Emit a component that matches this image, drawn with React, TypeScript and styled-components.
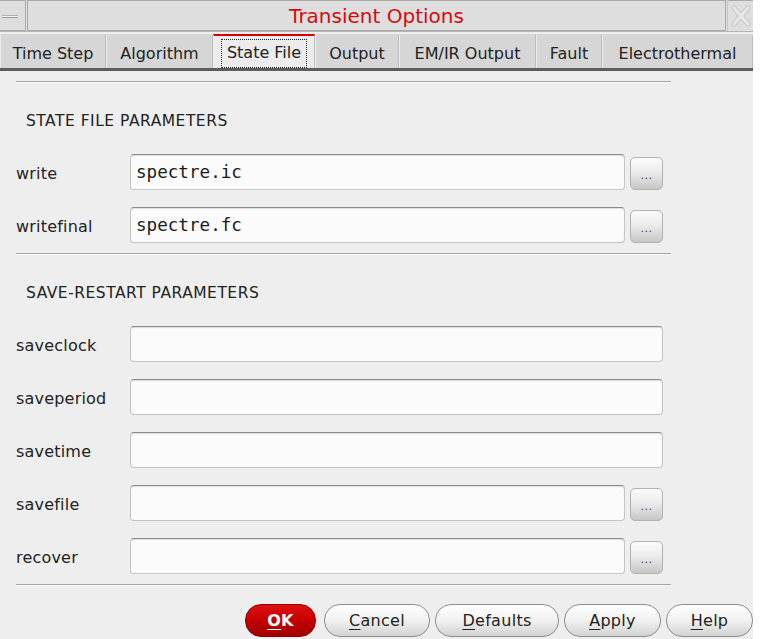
import React from "react";
import styled, { createGlobalStyle, css } from "styled-components";

const Global = createGlobalStyle`
  html, body { margin: 0; padding: 0; background: #ffffff; }
  body { font-family: "DejaVu Sans", "Liberation Sans", sans-serif; }
`;

const Window = styled.div`
  width: 753px;
  height: 639px;
  background: #eeeeee;
  display: flex;
  flex-direction: column;
  overflow: hidden;
  color: #222;
`;

const TitleBar = styled.div`
  height: 33px;
  display: flex;
  background: #dedede;
  border-bottom: 1px solid #b4b4b4;
  box-sizing: border-box;
  margin-bottom: 2px;
`;

const MinBox = styled.div`
  width: 26px;
  box-sizing: border-box;
  border: 1px solid #a9a9a9;
  border-left: none;
  display: flex;
  align-items: center;
  justify-content: flex-start;
  padding-left: 2px;
`;

const MinBar = styled.div`
  width: 16px;
  height: 3px;
  background: #f4f4f4;
  border-top: 1px solid #b0b0b0;
  border-bottom: 1px solid #9a9a9a;
  box-sizing: border-box;
  margin-top: 2px;
`;

const TitleBox = styled.div`
  flex: 1;
  margin-left: 1px;
  box-sizing: border-box;
  border: 1px solid #a9a9a9;
  display: flex;
  align-items: center;
  justify-content: center;
  font-size: 20px;
  color: #d20d0d;
  padding-top: 1px;
`;

const CloseBox = styled.div`
  width: 26px;
  margin-left: 1px;
  box-sizing: border-box;
  border-top: 1px solid #a9a9a9;
  border-left: 1px solid #c6c6c6;
  display: flex;
  align-items: center;
  justify-content: center;
`;

const TabBar = styled.div`
  display: flex;
  height: 38px;
  box-sizing: border-box;
  background: #d6d6d6;
  border-bottom: 3px solid #5c5c5c;
`;

const Tab = styled.div<{ $w: number; $active?: boolean }>`
  width: ${(p) => p.$w}px;
  box-sizing: border-box;
  display: flex;
  align-items: center;
  justify-content: center;
  padding-top: 3px;
  font-size: 16px;
  color: #222;
  border-right: 1px solid #bcbcbc;
  border-left: 1px solid #ececec;
  border-top: 2px solid #d6d6d6;
  ${(p) =>
    p.$active &&
    css`
      background: #ececec;
      border-top: 2px solid #d40000;
    `}
`;

const FocusRing = styled.span`
  border: 1px dotted #222;
  padding: 3px 5px 4px;
  line-height: 20px;
`;

const Content = styled.div`
  flex: 1;
  display: flex;
  flex-direction: column;
  padding-left: 16px;
  padding-top: 10px;
`;

const Separator = styled.div`
  width: 655px;
  height: 1px;
  background: #a4a4a4;
  border-bottom: 1px solid #fafafa;
`;

const SectionHeader = styled.div`
  height: 71px;
  display: flex;
  align-items: center;
  padding-left: 10px;
  padding-top: 5px;
  box-sizing: border-box;
  font-size: 15.5px;
  letter-spacing: 0.5px;
  color: #222;
`;

const Rows = styled.div`
  display: flex;
  flex-direction: column;
  gap: 17px;
  margin-bottom: 10px;
`;

const Row = styled.div`
  display: flex;
  align-items: flex-end;
  height: 36px;
`;

const Label = styled.div`
  width: 114px;
  align-self: center;
  padding-top: 2px;
  font-size: 16px;
  letter-spacing: 0.2px;
  color: #222;
`;

const Field = styled.input<{ $w: number }>`
  width: ${(p) => p.$w}px;
  height: 36px;
  box-sizing: border-box;
  margin: 0;
  padding: 0 0 0 5px;
  background: #fbfbfb;
  border: 1px solid #c4c4c4;
  border-top: 1px solid #8a8a8a;
  border-radius: 4px;
  box-shadow: inset 0 1px 1px rgba(0, 0, 0, 0.12);
  font-family: "DejaVu Sans Mono", "Liberation Mono", monospace;
  font-size: 17.6px;
  color: #1a1a1a;
  outline: none;
`;

const Browse = styled.div`
  width: 33px;
  height: 33px;
  margin-left: 5px;
  box-sizing: border-box;
  border: 1px solid #b2b2b2;
  border-radius: 5px;
  background: linear-gradient(#fbfbfb, #ececec 45%, #c6c6c6);
  display: flex;
  align-items: flex-end;
  justify-content: center;
  padding-bottom: 8px;
  font-size: 11px;
  line-height: 11px;
  color: #444;
  letter-spacing: 0.5px;
`;

const Footer = styled.div`
  display: flex;
  justify-content: flex-end;
  gap: 5px;
  padding: 18px 0 2px;
  margin-left: -16px;
`;

const Button = styled.div<{ $w: number; $primary?: boolean }>`
  width: ${(p) => p.$w}px;
  height: 33px;
  box-sizing: border-box;
  border-radius: 16px;
  display: flex;
  align-items: center;
  justify-content: center;
  font-size: 16px;
  letter-spacing: 0.3px;
  color: #222;
  border: 1px solid #8e8e8e;
  background: linear-gradient(#ffffff, #f1f1f1 50%, #d2d2d2);
  ${(p) =>
    p.$primary &&
    css`
      color: #ffffff;
      font-weight: bold;
      border: 1px solid #8a0000;
      background: linear-gradient(#e01010, #c40000 50%, #a00000);
    `}
  u {
    text-decoration-thickness: 1px;
    text-underline-offset: 3px;
  }
`;

const CloseIcon = () => (
  <svg width="20" height="22" viewBox="0 0 20 22">
    <path
      d="M3 3 L17 19 M17 3 L3 19"
      stroke="#c8c8c8"
      strokeWidth="5"
      strokeLinecap="round"
      fill="none"
    />
    <path
      d="M3 3 L17 19 M17 3 L3 19"
      stroke="#e8e8e8"
      strokeWidth="3"
      strokeLinecap="round"
      fill="none"
    />
  </svg>
);

const tabs: { name: string; w: number }[] = [
  { name: "Time Step", w: 106 },
  { name: "Algorithm", w: 107 },
  { name: "State File", w: 102 },
  { name: "Output", w: 84 },
  { name: "EM/IR Output", w: 137 },
  { name: "Fault", w: 66 },
  { name: "Electrothermal", w: 151 },
];

type FieldDef = { label: string; value: string; browse: boolean };

const stateFields: FieldDef[] = [
  { label: "write", value: "spectre.ic", browse: true },
  { label: "writefinal", value: "spectre.fc", browse: true },
];

const restartFields: FieldDef[] = [
  { label: "saveclock", value: "", browse: false },
  { label: "saveperiod", value: "", browse: false },
  { label: "savetime", value: "", browse: false },
  { label: "savefile", value: "", browse: true },
  { label: "recover", value: "", browse: true },
];

const FieldRows = ({ fields }: { fields: FieldDef[] }) => (
  <Rows>
    {fields.map((f) => (
      <Row key={f.label}>
        <Label>{f.label}</Label>
        <Field $w={f.browse ? 495 : 533} defaultValue={f.value} readOnly />
        {f.browse && <Browse>...</Browse>}
      </Row>
    ))}
  </Rows>
);

export default function App() {
  return (
    <>
      <Global />
      <Window>
        <TitleBar>
          <MinBox>
            <MinBar />
          </MinBox>
          <TitleBox>Transient Options</TitleBox>
          <CloseBox>
            <CloseIcon />
          </CloseBox>
        </TitleBar>
        <TabBar>
          {tabs.map((t) => (
            <Tab key={t.name} $w={t.w} $active={t.name === "State File"}>
              {t.name === "State File" ? <FocusRing>{t.name}</FocusRing> : t.name}
            </Tab>
          ))}
        </TabBar>
        <Content>
          <Separator />
          <SectionHeader>STATE FILE PARAMETERS</SectionHeader>
          <FieldRows fields={stateFields} />
          <Separator />
          <SectionHeader>SAVE-RESTART PARAMETERS</SectionHeader>
          <FieldRows fields={restartFields} />
          <Separator />
          <Footer>
            <Button $w={71} $primary style={{ marginRight: 3 }}>
              <u>O</u>K
            </Button>
            <Button $w={106}>
              <u>C</u>ancel
            </Button>
            <Button $w={124}>
              <u>D</u>efaults
            </Button>
            <Button $w={97}>
              <u>A</u>pply
            </Button>
            <Button $w={87}>
              <u>H</u>elp
            </Button>
          </Footer>
        </Content>
      </Window>
    </>
  );
}
